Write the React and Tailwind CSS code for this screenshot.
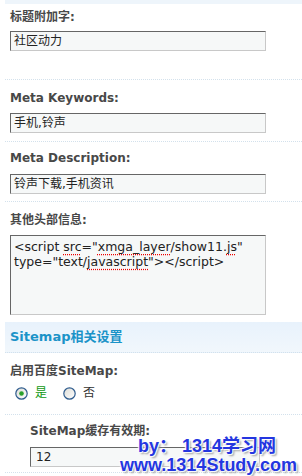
import React from "react";

const F = { fontFamily: '"DejaVu Sans", "Noto Sans CJK SC", sans-serif' };

function Label({ children, className = "" }) {
  return (
    <div className={"text-[12px] leading-[16px] font-bold text-[#484848] " + className}>
      {children}
    </div>
  );
}

function Input({ children, className = "w-[256px]" }) {
  return (
    <div
      className={
        "h-[20px] border-t border-l border-b border-r border-t-[#666] border-l-[#666] border-b-[#c8c8c8] border-r-[#c8c8c8] bg-[#f6f8f8] pl-[3px] text-[12px] leading-[18px] text-[#222] " +
        className
      }
    >
      {children}
    </div>
  );
}

function Radio({ checked }) {
  return (
    <svg width="13" height="13" viewBox="0 0 13 13">
      <defs>
        <linearGradient id={checked ? "rg1" : "rg2"} x1="0" y1="0" x2="1" y2="1">
          <stop offset="0" stopColor="#dcdcd6" />
          <stop offset="1" stopColor="#ffffff" />
        </linearGradient>
      </defs>
      <circle cx="6.5" cy="6.5" r="5.7" fill={`url(#${checked ? "rg1" : "rg2"})`} stroke="#2f5c8e" strokeWidth="1.2" />
      {checked && <circle cx="6.5" cy="6.5" r="2.3" fill="#2aa02a" />}
    </svg>
  );
}

const sp = "underline decoration-dotted decoration-[#e00] underline-offset-[3px]";

export default function App() {
  return (
    <div className="relative h-[476px] w-[302px] overflow-hidden bg-white" style={F}>
      <div className="ml-[5px] h-[4px] bg-[#eef5fb]" />
      <div className="ml-[5px] pl-[5px] pt-[5px] pb-[28px]">
        <Label>标题附加字:</Label>
        <Input className="mt-[6px] w-[256px]">社区动力</Input>
      </div>
      <div className="ml-[5px] border-t border-dotted border-[#d3e1ec] pl-[5px] pt-[10px] pb-[8px]">
        <Label>Meta Keywords:</Label>
        <Input className="mt-[7px] w-[256px]">手机,铃声</Input>
      </div>
      <div className="ml-[5px] border-t border-dotted border-[#d3e1ec] pl-[5px] pt-[8px] pb-[7px]">
        <Label>Meta Description:</Label>
        <Input className="mt-[8px] w-[256px]">铃声下载,手机资讯</Input>
      </div>
      <div className="ml-[5px] border-t border-dotted border-[#d3e1ec] pl-[5px] pt-[10px] pb-[7px]">
        <Label>其他头部信息:</Label>
        <div className="mt-[7px] h-[80px] w-[256px] border-t border-l border-b border-r border-t-[#666] border-l-[#666] border-b-[#c8c8c8] border-r-[#c8c8c8] bg-[#f6f8f8] pl-[3px] pt-[3px] text-[12.5px] leading-[15px] text-[#222]">
          <div>
            &lt;script <span className={sp}>src</span>="<span className={sp}>xmga_layer</span>/show11.<span className={sp}>js</span>"
          </div>
          <div>
            type="text/<span className={sp}>javascript</span>"&gt;&lt;/script&gt;
          </div>
        </div>
      </div>
      <div className="ml-[5px] flex h-[31px] items-center border-b border-dotted border-[#d3e1ec] bg-gradient-to-b from-[#e8f2fc] to-[#f1f7fc] pl-[5px] text-[13px] font-bold text-[#1b93c8]">
        Sitemap相关设置
      </div>
      <div className="ml-[5px] pl-[5px] pt-[10px] pb-[13px]">
        <Label>启用百度SiteMap:</Label>
        <div className="mt-[6px] flex h-[16px] items-center pl-[5px] text-[12px]">
          <Radio checked />
          <span className="ml-[7px] text-[#119911]">是</span>
          <span className="ml-[16px] flex"><Radio /></span>
          <span className="ml-[7px] text-[#333]">否</span>
        </div>
      </div>
      <div className="ml-[5px] border-t border-dotted border-[#d3e1ec] pl-[25px] pt-[8px] pb-[5px]">
        <Label>SiteMap缓存有效期:</Label>
        <Input className="mt-[8px] w-[230px] pl-[5px]">12</Input>
      </div>
      <div className="ml-[5px] border-t border-dotted border-[#d3e1ec]" />

      <div
        className="absolute left-[120px] top-[437px] text-[18px] font-bold leading-[19px] text-[#2436e0] [text-shadow:0_0_2px_#fff,1px_1px_1px_#fff,-1px_-1px_1px_#fff,2px_2px_2px_#999]"
        style={{ fontFamily: '"Liberation Sans", "Noto Sans CJK SC", sans-serif' }}
      >
        <div className="pl-[18px]">by：&nbsp;1314学习网</div>
        <div>www.1314Study.com</div>
      </div>
    </div>
  );
}
